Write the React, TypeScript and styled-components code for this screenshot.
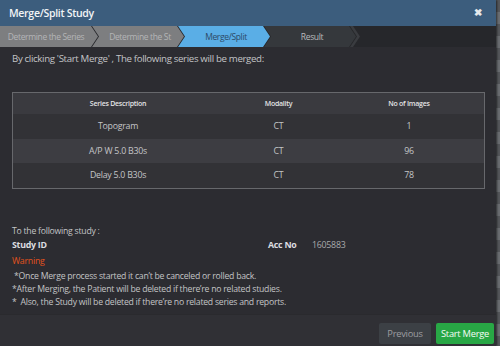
import React from 'react';
import styled, {createGlobalStyle} from 'styled-components';

const GlobalStyle = createGlobalStyle`
  html, body {
    margin: 0;
    padding: 0;
    background: #55575b;
    font-family: "Open Sans", "Liberation Sans", sans-serif;
    overflow: hidden;
  }
`;

interface Step {
  label: string;
  state: 'done' | 'active' | 'todo';
}

interface SeriesRow {
  description: string;
  modality: string;
  images: number;
}

const steps: Step[] = [
  {label: 'Determine the Series', state: 'done'},
  {label: 'Determine the St', state: 'done'},
  {label: 'Merge/Split', state: 'active'},
  {label: 'Result', state: 'todo'},
];

const series: SeriesRow[] = [
  {description: 'Topogram', modality: 'CT', images: 1},
  {description: 'A/P W 5.0 B30s', modality: 'CT', images: 96},
  {description: 'Delay 5.0 B30s', modality: 'CT', images: 78},
];

const warnings = [
  '\u00a0*Once Merge process started it can\u2019t be canceled or rolled back.',
  '*After Merging, the Patient will be deleted if there\u2019re no related studies.',
  '*\u00a0\u00a0Also, the Study will be deleted if there\u2019re no related series and reports.',
];

export default function App() {
  return (
    <>
      <GlobalStyle />
      <Page>
        <Modal>
          <Header>
            <Title>Merge/Split Study</Title>
            <Close>&#x2716;</Close>
          </Header>
          <Steps>
            {steps.map((step, i) => (
              <StepItem key={step.label} $state={step.state} $first={i === 0}>
                {step.label}
              </StepItem>
            ))}
            <StepTail />
          </Steps>
          <Body>
            <Intro>By clicking 'Start Merge' , The following series will be merged:</Intro>
            <Table>
              <thead>
                <tr>
                  <Th style={{width: '44.5%'}}>Series Description</Th>
                  <Th style={{width: '23.5%'}}>Modality</Th>
                  <Th>No of Images</Th>
                </tr>
              </thead>
              <tbody>
                {series.map((row, i) => (
                  <Tr key={row.description} $odd={i % 2 === 1}>
                    <Td>{row.description}</Td>
                    <Td>{row.modality}</Td>
                    <Td>{row.images}</Td>
                  </Tr>
                ))}
              </tbody>
            </Table>
            <Study>
              <Line>To the following study :</Line>
              <StudyRow>
                <Label>Study ID</Label>
                <Label>Acc No</Label>
                <Value>1605883</Value>
              </StudyRow>
              <Warning>Warning</Warning>
              {warnings.map((w) => (
                <Line key={w}>{w}</Line>
              ))}
            </Study>
          </Body>
          <Footer>
            <ButtonSecondary>Previous</ButtonSecondary>
            <ButtonPrimary>Start Merge</ButtonPrimary>
          </Footer>
        </Modal>
      </Page>
    </>
  );
}

const Page = styled.div`
  width: 500px;
  height: 346px;
  display: flex;
  background: repeating-linear-gradient(180deg, #55575b 0 12px, #6b6e72 12px 24px);
`;

const Modal = styled.div`
  width: 496px;
  height: 346px;
  display: flex;
  flex-direction: column;
  background: #2c2c31;
  box-shadow: 1px 0 2px rgba(0, 0, 0, 0.6);
  overflow: hidden;
`;

const Header = styled.div`
  height: 26px;
  flex: none;
  display: flex;
  align-items: center;
  justify-content: space-between;
  padding: 0 14px 0 9px;
  background: #3c5d7d;
`;

const Title = styled.div`
  color: #f2f4f6;
  font-size: 10.5px;
  font-weight: 600;
  letter-spacing: -0.3px;
`;

const Close = styled.span`
  color: #e6e9ec;
  font-size: 10px;
  font-weight: 700;
  margin-top: -3px;
`;

const Steps = styled.div`
  height: 21px;
  flex: none;
  display: flex;
  background: #26272b;
`;

const stepBg = {done: '#7d7e80', active: '#5aaee6', todo: '#35383c'};
const stepFg = {done: '#b4b5b7', active: '#2d4a66', todo: '#b9bbbd'};

const StepItem = styled.div<{$state: Step['state']; $first: boolean}>`
  width: ${(p) => (p.$first ? 98 : 92)}px;
  margin-left: ${(p) => (p.$first ? 0 : -6)}px;
  flex: none;
  display: flex;
  align-items: center;
  justify-content: center;
  padding: ${(p) => (p.$first ? '0 6px 0 0' : '0 0 0 4px')};
  box-sizing: border-box;
  background: ${(p) => stepBg[p.$state]};
  color: ${(p) => stepFg[p.$state]};
  font-size: 8.5px;
  letter-spacing: -0.35px;
  white-space: nowrap;
  overflow: hidden;
  clip-path: ${(p) =>
    p.$first
      ? 'polygon(0 0, calc(100% - 7px) 0, 100% 50%, calc(100% - 7px) 100%, 0 100%)'
      : 'polygon(0 0, calc(100% - 7px) 0, 100% 50%, calc(100% - 7px) 100%, 0 100%, 7px 50%)'};
`;

const StepTail = styled.div`
  width: 10px;
  margin-left: -6px;
  background: #3a3c40;
  clip-path: polygon(0 0, 3px 0, 10px 50%, 3px 100%, 0 100%, 7px 50%);
`;

const Body = styled.div`
  flex: 1;
  padding: 5px 11px 0 12px;
`;

const Intro = styled.div`
  color: #c3c4c6;
  font-size: 9.7px;
  line-height: 14px;
  letter-spacing: -0.35px;
  margin-bottom: 26px;
`;

const Table = styled.table`
  width: 473px;
  border-collapse: collapse;
  border: 1px solid #67686c;
  table-layout: fixed;
`;

const Th = styled.th`
  height: 21px;
  padding: 0;
  background: #3a3a3f;
  color: #e3e3e5;
  font-size: 7px;
  font-weight: 600;
  letter-spacing: -0.25px;
`;

const Tr = styled.tr<{$odd: boolean}>`
  background: ${(p) => (p.$odd ? '#3d3d42' : '#323236')};
`;

const Td = styled.td`
  height: 24.5px;
  padding: 0;
  text-align: center;
  color: #c4c5c7;
  font-size: 8.8px;
  letter-spacing: -0.25px;
`;

const Study = styled.div`
  margin-top: 36px;
  display: flex;
  flex-direction: column;
`;

const Line = styled.div`
  color: #c3c4c6;
  font-size: 8.7px;
  line-height: 13px;
  letter-spacing: -0.25px;
  white-space: pre;
`;

const StudyRow = styled.div`
  display: flex;
  align-items: center;
  height: 15px;
`;

const Label = styled.span`
  color: #dcdde0;
  font-size: 8.8px;
  font-weight: 700;
  letter-spacing: -0.25px;
  &:first-child {
    width: 256px;
  }
  & + & {
    width: 44px;
  }
`;

const Value = styled.span`
  color: #a9aaad;
  font-size: 8.8px;
  letter-spacing: -0.25px;
`;

const Warning = styled.div`
  color: #e2521d;
  font-size: 8.8px;
  line-height: 17px;
  letter-spacing: -0.25px;
`;

const Footer = styled.div`
  flex: none;
  height: 32px;
  display: flex;
  align-items: flex-start;
  justify-content: flex-end;
  gap: 5px;
  padding: 8px 2px 0 0;
  box-sizing: border-box;
  background: #303035;
  border-top: 1px solid #2a2a2e;
`;

const Button = styled.button`
  height: 21px;
  border: none;
  border-radius: 2px;
  padding: 0;
  font-family: inherit;
  font-size: 9.3px;
  letter-spacing: -0.25px;
  cursor: pointer;
`;

const ButtonSecondary = styled(Button)`
  width: 52px;
  background: #3c4045;
  color: #9c9ea1;
`;

const ButtonPrimary = styled(Button)`
  width: 58px;
  background: #28a745;
  color: #f4fbf6;
`;
